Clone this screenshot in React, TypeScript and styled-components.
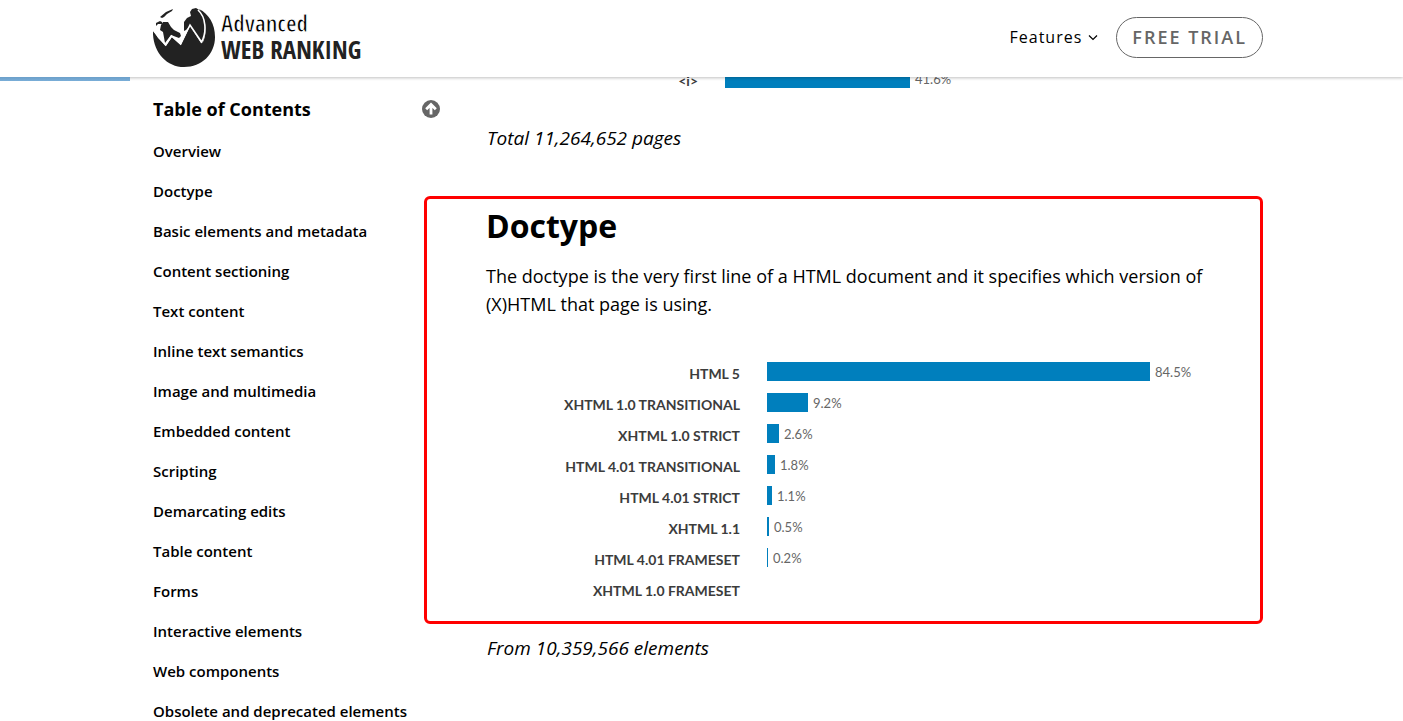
import React from "react";
import styled, { createGlobalStyle } from "styled-components";

const Global = createGlobalStyle`
  * { box-sizing: border-box; }
  html, body { margin: 0; }
  body {
    background: #fff;
    color: #000;
    font-family: "Open Sans", "Noto Sans", sans-serif;
    height: 100vh;
    overflow: hidden;
  }
  h1, h2, p, ul { margin: 0; padding: 0; }
  ul { list-style: none; }
  a { color: inherit; text-decoration: none; }
  button { font: inherit; color: inherit; background: none; border: 0; padding: 0; cursor: pointer; }
`;

const Header = styled.header`
  position: relative;
  z-index: 1;
  display: flex;
  justify-content: space-between;
  align-items: center;
  height: 77px;
  padding: 0 140px 2px 153px;
  background: #fff;
  box-shadow: 0 1px 3px rgba(0, 0, 0, 0.25);
`;

const Progress = styled.div`
  position: absolute;
  left: 0;
  top: 100%;
  width: 130px;
  height: 4px;
  background: linear-gradient(#6b9fc9, #7aaed8);
`;

const Logo = styled.a`
  display: flex;
  gap: 6px;
  svg { display: block; }
`;

const WordMark = styled.span`
  display: flex;
  flex-direction: column;
  padding-top: 2px;
  color: #222;
  font-family: "Open Sans Condensed", "Open Sans", sans-serif;
  font-weight: 700;
  line-height: 26px;
`;

const WordTop = styled.span`
  color: #000;
  font-size: 23px;
  -webkit-text-stroke: 1px #fff;
`;

const WordBottom = styled.span`
  font-size: 25px;
`;

const Nav = styled.nav`
  display: flex;
  align-items: center;
  gap: 18px;
`;

const MenuButton = styled.button`
  display: flex;
  align-items: center;
  gap: 6px;
  padding-bottom: 2px;
  font-size: 16px;
  letter-spacing: 1px;
`;

const Trial = styled.a`
  height: 41px;
  padding: 0 15px;
  border: 1px solid #666;
  border-radius: 21px;
  color: #666;
  font-size: 18px;
  font-weight: 600;
  line-height: 39px;
  letter-spacing: 2px;
`;

const Page = styled.div`
  display: grid;
  grid-template-columns: 287px minmax(0, 1fr);
  padding: 0 140px 0 153px;
`;

const Toc = styled.aside`
  padding-top: 18px;
`;

const TocHead = styled.div`
  display: flex;
  justify-content: space-between;
  align-items: center;
  height: 28px;
  margin-bottom: 8px;
`;

const TocTitle = styled.h2`
  font-size: 18px;
  line-height: 28px;
`;

const TopButton = styled.button`
  display: flex;
  svg { display: block; }
`;

const TocItem = styled.li`
  font-size: 15px;
  font-weight: 600;
  line-height: 40px;
  white-space: nowrap;
`;

const Content = styled.main`
  display: flex;
  flex-direction: column;
`;

const Note = styled.p`
  padding-left: 47px;
  font-size: 19px;
  font-style: italic;
  line-height: 28px;
`;

const Figure = styled.div<{ $clipped?: boolean }>`
  display: grid;
  row-gap: 12px;
  padding-left: ${(p) => (p.$clipped ? 5 : 48)}px;
  margin: ${(p) => (p.$clipped ? "-8px 0 36px" : "44px 0 0")};
`;

const Row = styled.div`
  display: grid;
  grid-template-columns: 253px minmax(0, 454px);
  column-gap: 27px;
  align-items: center;
  height: 19px;
  font-family: Lato, sans-serif;
`;

const RowLabel = styled.span`
  padding-top: 4px;
  color: #3c3c3c;
  font-size: 14px;
  font-weight: 700;
  line-height: 15px;
  text-align: right;
`;

const Track = styled.div`
  display: flex;
  align-items: center;
  gap: 5px;
  color: #666;
  font-size: 13px;
  line-height: 18px;
`;

const Bar = styled.span`
  height: 19px;
  background: #007fbd;
`;

const Section = styled.section`
  width: calc(100% + 16px);
  margin: 44px 0 10px -16px;
  padding: 5px 43px 23px 12px;
  border: 3px solid #f00;
  border-radius: 6px;
`;

const Title = styled.h1`
  padding-left: 47px;
  font-size: 32px;
  line-height: 44px;
`;

const Text = styled.p`
  padding: 14px 0 0 47px;
  font-size: 18px;
  line-height: 28px;
`;

const contents = [
  "Overview", "Doctype", "Basic elements and metadata", "Content sectioning",
  "Text content", "Inline text semantics", "Image and multimedia",
  "Embedded content", "Scripting", "Demarcating edits", "Table content",
  "Forms", "Interactive elements", "Web components",
  "Obsolete and deprecated elements",
];

type Datum = { label: string; value?: string; width: number };

const doctypes: Datum[] = [
  { label: "HTML 5", value: "84.5%", width: 383 },
  { label: "XHTML 1.0 TRANSITIONAL", value: "9.2%", width: 41 },
  { label: "XHTML 1.0 STRICT", value: "2.6%", width: 12 },
  { label: "HTML 4.01 TRANSITIONAL", value: "1.8%", width: 8 },
  { label: "HTML 4.01 STRICT", value: "1.1%", width: 5 },
  { label: "XHTML 1.1", value: "0.5%", width: 2 },
  { label: "HTML 4.01 FRAMESET", value: "0.2%", width: 1 },
  { label: "XHTML 1.0 FRAMESET", width: 0 },
];

const ChartRow = ({ label, value, width }: Datum) => (
  <Row>
    <RowLabel>{label}</RowLabel>
    <Track>
      <Bar style={{ width }} />
      {value && <span>{value}</span>}
    </Track>
  </Row>
);

const Globe = () => (
  <svg width="62" height="60" viewBox="0 0 62 60" fill="#222" aria-hidden="true">
    <path d="M0 22 C-1 43 13 59 31 59 C49 59 62 46 62 29 C62 16 56 6 46 1 C52 8 55 24 50 34 L48 35 L37 18 L28 37 L19 29 L13 38 L5 30 Z" />
    <path d="M31 23 L31 14 L34 10 L38 8 L37 4 L39 1 L43 0 L48 3 C53 9 55 24 49 35 L37 18 L33 22 Z" />
    <path d="M8 17 L10 14 L15 14 L18 19 L21 22 L27 25 L28 28 L26 30 L18 27 L12 35 L10 24 L7 22 Z" />
    <path d="M7 9 L13 4 L20 1 L19 3 L14 6 L11 9 L9 10 Z M3 15 L7 13 L9 14 L9 16 L5 16 L3 18 Z" />
    <path
      fill="none"
      stroke="#fff"
      strokeWidth="1.6"
      d="M0 22 L12.5 37 L18.5 28 L27.5 36 L37 17 L48.5 34 C54 24 53 9 45 2"
    />
  </svg>
);

export default function App() {
  return (
    <>
      <Global />
      <Header>
        <Logo href="#">
          <Globe />
          <WordMark>
            <WordTop>Advanced</WordTop>
            <WordBottom>WEB RANKING</WordBottom>
          </WordMark>
        </Logo>
        <Nav>
          <MenuButton type="button">
            Features
            <svg width="10" height="8" viewBox="0 0 10 8" fill="none" stroke="#000" strokeWidth="1.2" aria-hidden="true">
              <path d="M1 2.5 L5 6.5 L9 2.5" />
            </svg>
          </MenuButton>
          <Trial href="#">FREE TRIAL</Trial>
        </Nav>
        <Progress />
      </Header>
      <Page>
        <Toc>
          <TocHead>
            <TocTitle>Table of Contents</TocTitle>
            <TopButton type="button" aria-label="Back to top">
              <svg width="18" height="18" viewBox="0 0 18 18" aria-hidden="true">
                <circle cx="9" cy="9" r="9" fill="#666" />
                <path d="M9 14.5 V5 M4.2 9.2 L9 4.4 L13.8 9.2" fill="none" stroke="#fff" strokeWidth="2.8" />
              </svg>
            </TopButton>
          </TocHead>
          <ul>
            {contents.map((item) => (
              <TocItem key={item}><a href="#">{item}</a></TocItem>
            ))}
          </ul>
        </Toc>
        <Content>
          <Figure $clipped>
            <ChartRow label="<i>" value="41.6%" width={185} />
          </Figure>
          <Note>Total 11,264,652 pages</Note>
          <Section>
            <Title>Doctype</Title>
            <Text>
              The doctype is the very first line of a HTML document and it specifies which version of
              (X)HTML that page is using.
            </Text>
            <Figure>
              {doctypes.map((d) => <ChartRow key={d.label} {...d} />)}
            </Figure>
          </Section>
          <Note>From 10,359,566 elements</Note>
        </Content>
      </Page>
    </>
  );
}
